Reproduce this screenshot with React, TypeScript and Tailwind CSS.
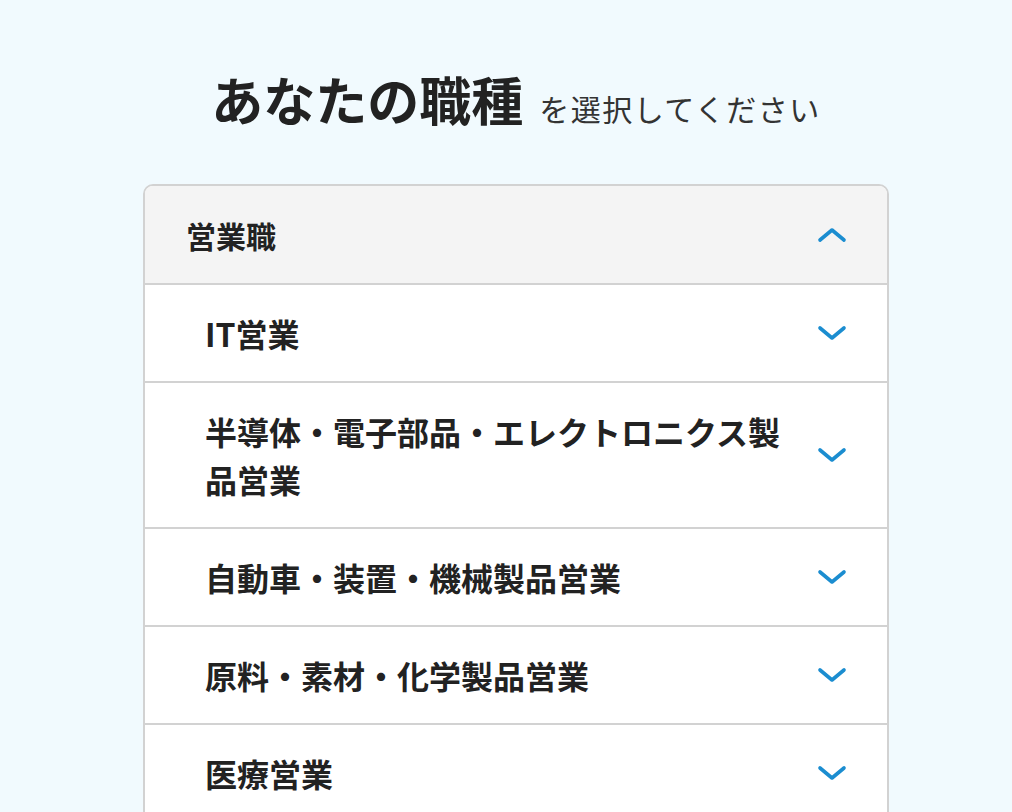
const font = { fontFamily: '"Noto Sans CJK JP", "Noto Sans", sans-serif' };

const items = [
  'IT営業',
  '半導体・電子部品・エレクトロニクス製品営業',
  '自動車・装置・機械製品営業',
  '原料・素材・化学製品営業',
  '医療営業',
];

function Chevron({ up = false }: { up?: boolean }) {
  return (
    <svg
      width="30"
      height="16"
      viewBox="0 0 30 16"
      fill="none"
      stroke="#1b8dd0"
      strokeWidth={3.6}
      strokeLinecap="round"
      strokeLinejoin="round"
      className="shrink-0"
    >
      {up ? <path d="M3 13 L15 3 L27 13" /> : <path d="M3 3 L15 13 L27 3" />}
    </svg>
  );
}

export default function App() {
  return (
    <div className="min-h-[812px] w-full overflow-hidden bg-[#f1fafe] text-[#222]" style={font}>
      <div className="mx-auto flex w-[746px] translate-x-[10px] flex-col items-center pt-[63px]">
        {/* Heading */}
        <h1 className="flex items-baseline justify-center gap-[16px]">
          <span className="text-[52px] font-bold leading-[72px]">あなたの職種</span>
          <span className="text-[30px] leading-[40px] tracking-[1.5px] text-[#333]">を選択してください</span>
        </h1>

        {/* Accordion */}
        <div className="mt-[49px] w-full overflow-hidden rounded-[10px] border-2 border-[#d2d2d2] bg-white">
          <div className="flex items-center justify-between bg-[#f4f4f4] pl-[41px] pr-[40px] pt-[26px] pb-[25px]">
            <span className="text-[30px] font-bold leading-[46px]">営業職</span>
            <Chevron up />
          </div>
          {items.map((label) => (
            <div
              key={label}
              className="flex items-center justify-between gap-[20px] border-t-2 border-[#d2d2d2] pl-[60px] pr-[40px] py-[24px]"
            >
              <span className="max-w-[590px] text-[32px] font-bold leading-[48px]">{label}</span>
              <Chevron />
            </div>
          ))}
        </div>
      </div>
    </div>
  );
}
